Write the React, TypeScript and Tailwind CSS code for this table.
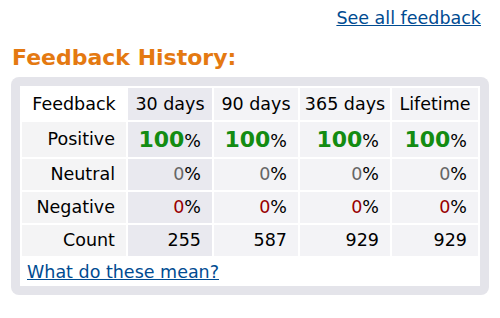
const rows = [
  { label: "Positive", kind: "pos", values: ["100", "100", "100", "100"] },
  { label: "Neutral", kind: "neu", values: ["0", "0", "0", "0"] },
  { label: "Negative", kind: "neg", values: ["0", "0", "0", "0"] },
  { label: "Count", kind: "count", values: ["255", "587", "929", "929"] },
];

const periods = ["30 days", "90 days", "365 days", "Lifetime"];
const colBg = ["bg-[#e9e9ef]", "bg-[#f3f3f6]", "bg-[#f3f3f6]", "bg-[#f3f3f6]"];
const colW = ["w-[84px]", "w-[84px]", "w-[90px]", "w-[86px]"];

function Value({ kind, v }: { kind: string; v: string }) {
  if (kind === "pos")
    return (
      <>
        <span className="text-[22px] font-bold text-[#138c12]">{v}</span>%
      </>
    );
  if (kind === "neu")
    return (
      <>
        <span className="text-[#666666]">{v}</span>%
      </>
    );
  if (kind === "neg")
    return (
      <>
        <span className="text-[#990000]">{v}</span>%
      </>
    );
  return <>{v}</>;
}

export default function App() {
  return (
    <div className="w-[500px] h-[318px] bg-white text-black font-['DejaVu_Sans',Verdana,sans-serif] text-[17.5px]">
      <div className="flex justify-end pr-[19px] pt-[8px] leading-[20px]">
        <a href="#" className="text-[#004b91] underline">
          See all feedback
        </a>
      </div>

      <h2 className="mt-[17px] ml-[12px] text-[22px] font-bold leading-[26px] text-[#e47911]">
        Feedback History:
      </h2>

      {/* ── Feedback table ─────────────────────────── */}
      <div className="mt-[6px] ml-[11px] w-[478px] rounded-[8px] bg-[#e4e4ea] p-[9px]">
        <div className="bg-white pb-[4px]">
          <table className="border-separate border-spacing-[2px] w-[460px]">
            <thead>
              <tr className="h-[32px]">
                <th className="bg-white font-normal text-center w-[104px]">Feedback</th>
                {periods.map((p, i) => (
                  <th key={p} className={`${colBg[i]} ${colW[i]} font-normal text-center`}>
                    {p}
                  </th>
                ))}
              </tr>
            </thead>
            <tbody>
              {rows.map((r) => (
                <tr key={r.label} className={r.kind === "pos" ? "h-[35px]" : "h-[31px]"}>
                  <td className="bg-[#f4f4f5] text-right pr-[11px]">{r.label}</td>
                  {r.values.map((v, i) => (
                    <td key={i} className={`${colBg[i]} text-right pr-[11px]`}>
                      <Value kind={r.kind} v={v} />
                    </td>
                  ))}
                </tr>
              ))}
            </tbody>
          </table>
          <div className="ml-[7px] mt-[4px] leading-[20px]">
            <a href="#" className="text-[#004b91] underline">
              What do these mean?
            </a>
          </div>
        </div>
      </div>
    </div>
  );
}
